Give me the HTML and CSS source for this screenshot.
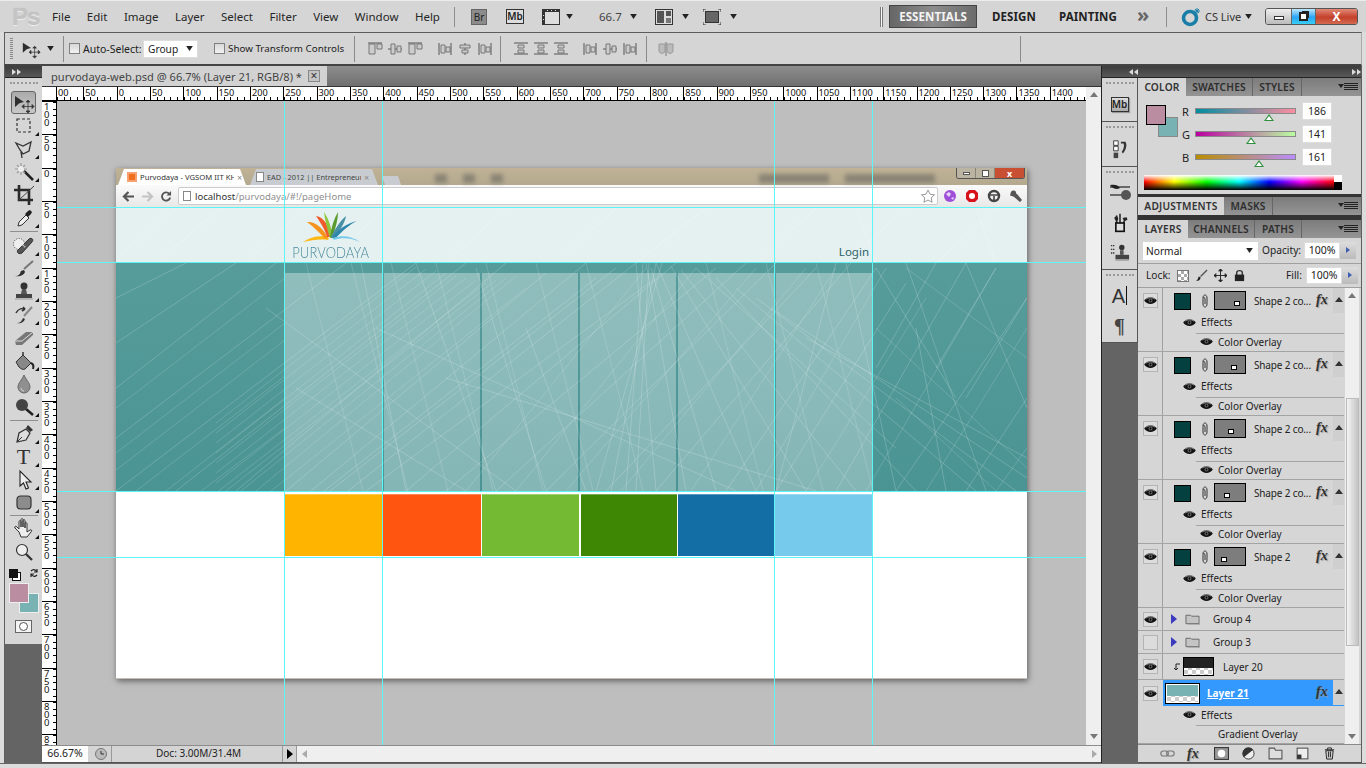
FILE: index.html
```html
<!DOCTYPE html>
<html lang="en">
<head>
<meta charset="utf-8">
<title>Photoshop CS5 - purvodaya-web.psd</title>
<link rel="stylesheet" href="styles.css">
</head>
<body>
<svg class="defs" xmlns="http://www.w3.org/2000/svg">
  <symbol id="i-move" viewBox="0 0 24 22"><path d="M3 4l9 6-4 1-1 .5L3 15z" fill="#2e2e2e"/><path d="M16 9v11M10.500 14.500h11M16 8l-2 2h4zM16 21l-2-2h4zM10 14.500l2-2v4zM22 14.500l-2-2v4z" fill="#333" stroke="#333" stroke-width=".8"/></symbol>
  <symbol id="i-marquee" viewBox="0 0 24 22"><rect x="5" y="4" width="13" height="13" fill="none" stroke="#333" stroke-width="1.200" stroke-dasharray="3 2"/></symbol>
  <symbol id="i-lasso" viewBox="0 0 24 22"><path d="M4 5l7 3 8-4-2 9-6 3-3-4zM9 14l1 6" fill="none" stroke="#333" stroke-width="1.300"/></symbol>
  <symbol id="i-wand" viewBox="0 0 24 22"><path d="M12 10l9 9" stroke="#222" stroke-width="2.500"/><path d="M9 2v12M3 8h12M5 4l8 8M13 4l-8 8" stroke="#999" stroke-width="1.200"/><circle cx="9" cy="8" r="3" fill="#eee"/></symbol>
  <symbol id="i-crop" viewBox="0 0 24 22"><path d="M7 1v15h14M2 6h15v15" fill="none" stroke="#2b2b2b" stroke-width="2.600"/><path d="M7 16L22 2" stroke="#444"/></symbol>
  <symbol id="i-drop" viewBox="0 0 24 22"><path d="M7 15l7-7 3 3-7 7-4 1z" fill="#eee" stroke="#333"/><path d="M13 7l3-3 2-1 2 2-1 2-3 3z" fill="#222"/></symbol>
  <symbol id="i-heal" viewBox="0 0 24 22"><circle cx="7" cy="9" r="5.500" fill="#eee" stroke="#444" stroke-dasharray="1 1.500"/><path d="M6 15L17 4c3-2 5 1 3 3L10 18c-3 2-6-1-4-3z" fill="#555" stroke="#333"/><path d="M11 10l2 2" stroke="#ddd" stroke-width="2" stroke-dasharray="1 1"/></symbol>
  <symbol id="i-brush" viewBox="0 0 24 22"><path d="M21 3L12 11" stroke="#777" stroke-width="2"/><path d="M3 18c4 0 5-2 6-5l3-1 1 2c-1 3-5 5-10 4z" fill="#2e2e2e"/></symbol>
  <symbol id="i-stamp" viewBox="0 0 24 22"><circle cx="12" cy="5" r="3.500" fill="#333"/><path d="M10 8h4l1 5H9z" fill="#555"/><path d="M4 13h16v4H4z" fill="#444"/><path d="M3 18h18" stroke="#999"/></symbol>
  <symbol id="i-hist" viewBox="0 0 24 22"><path d="M20 3L12 12" stroke="#888" stroke-width="2"/><path d="M5 19c3 0 5-2 6-5l2 1c-1 3-4 5-8 4z" fill="#333"/><path d="M4 9c2-4 6-5 9-4l-2-2M13 5l-3 2" fill="none" stroke="#333" stroke-width="1.600"/></symbol>
  <symbol id="i-eraser" viewBox="0 0 24 22"><path d="M3 14L14 5h7v3L10 18H4z" fill="#777"/><path d="M3 14h7l11-9" fill="none" stroke="#ddd"/></symbol>
  <symbol id="i-bucket" viewBox="0 0 24 22"><path d="M4 12l7-7 8 8-6 6c-2 1-4 0-6-2z" fill="#888" stroke="#333"/><path d="M11 5V2" stroke="#333" stroke-width="1.500"/><path d="M19 13c2 1 3 3 2 6" fill="none" stroke="#222" stroke-width="2"/></symbol>
  <symbol id="i-blur" viewBox="0 0 24 22"><path d="M12 2c2 5 6 8 6 12a6 6 0 0 1-12 0c0-4 4-7 6-12z" fill="#8f8f8f" stroke="#666"/><path d="M9 15c0 2 1 3 3 3" stroke="#ddd" fill="none"/></symbol>
  <symbol id="i-sponge" viewBox="0 0 24 22"><path d="M14 13l7 6" stroke="#222" stroke-width="2.500"/><circle cx="10" cy="9" r="6" fill="#444"/></symbol>
  <symbol id="i-pen" viewBox="0 0 24 22"><path d="M5 19l2-9 7-4 4 4-4 7z" fill="#ddd" stroke="#333" stroke-width="1.200"/><path d="M5 19l5-5" stroke="#333"/><path d="M14 5l2-3 5 5-3 2z" fill="#333"/></symbol>
  <symbol id="i-path" viewBox="0 0 24 22"><path d="M8 2v15l3.500-3 2.500 6 2.500-1-2.500-6H19z" fill="#eee" stroke="#222" stroke-width="1.100"/></symbol>
  <symbol id="i-shape" viewBox="0 0 24 22"><rect x="5" y="4" width="14" height="13" rx="3.500" fill="#8c8c8c" stroke="#333" stroke-width="1.200"/></symbol>
  <symbol id="i-hand" viewBox="0 0 24 22"><path d="M7 14L3 10c-1-2 1-2 2-1l2 2V4c0-2 2-2 2 0v5-7c0-2 2-2 2 0v7-6c0-2 2-2 2 0v7-5c0-1 2-1 2 1v8l3-2c2-1 2 1 1 2l-4 5H9z" fill="#eee" stroke="#333"/></symbol>
  <symbol id="i-zoom" viewBox="0 0 24 22"><circle cx="10" cy="9" r="5.500" fill="#eee" stroke="#333" stroke-width="1.200"/><path d="M14 13l6 6" stroke="#333" stroke-width="2.300"/></symbol>
  <symbol id="i-eye" viewBox="0 0 14 10"><path d="M0 5c3-5 11-5 14 0-3 5-11 5-14 0z" fill="#111"/><path d="M2 3.500c3-2 7-2 10 0" stroke="#bbb" stroke-width=".7" fill="none"/><circle cx="7" cy="5" r="2.200" fill="#666"/><circle cx="7" cy="5" r="1" fill="#000"/></symbol>
  <symbol id="i-clip" viewBox="0 0 8 14"><path d="M2 4c0-4 4-4 4 0v6c0 4-4 4-4 0V5c0-2 2-2 2 0v5" fill="none" stroke="#333" stroke-width="1"/></symbol>
  <symbol id="i-folder" viewBox="0 0 16 12"><path d="M1 2h5l1 1h8v8H1z" fill="#c4c4c4" stroke="#666"/><path d="M16 4v8H3" fill="none" stroke="#aaa"/></symbol>
  <symbol id="i-al" viewBox="0 0 16 14"><path d="M1 1h14" stroke="#555"/><path d="M2 2h6v10H2z" fill="#ccc" stroke="#777"/><path d="M10 2h5v5h-5z" fill="#ccc" stroke="#777"/></symbol>
  <symbol id="i-bl" viewBox="0 0 16 14"><path d="M1 7h14" stroke="#555"/><path d="M4 2h4v10H4z" fill="#ccc" stroke="#777"/><path d="M10 4h4v6h-4z" fill="#ccc" stroke="#777"/></symbol>
  <symbol id="i-cl" viewBox="0 0 16 14"><path d="M8 1v12" stroke="#555"/><path d="M3 3h10v3H3z" fill="#ccc" stroke="#777"/><path d="M5 8h6v3H5z" fill="#ccc" stroke="#777"/></symbol>
  <symbol id="i-dl" viewBox="0 0 16 14"><path d="M1 1h14M1 12h14" stroke="#555"/><path d="M5 3h6v3H5zM5 8h6v3H5z" fill="#ccc" stroke="#777"/></symbol>
  <symbol id="i-el" viewBox="0 0 16 14"><path d="M2 1v12M14 1v12" stroke="#555"/><path d="M4 3h4v8H4zM9 5h4v5H9z" fill="#ccc" stroke="#777"/></symbol>
  <symbol id="i-arrow" viewBox="0 0 8 6"><path d="M0 0h8L4 6z" fill="#222"/></symbol>
</svg>

<div class="app">
  <header class="menubar">
    <div class="ps">Ps</div>
    <nav class="menu"><span>File</span><span>Edit</span><span>Image</span><span>Layer</span><span>Select</span><span>Filter</span><span>View</span><span>Window</span><span>Help</span></nav>
    <i class="vsep vsep-a"></i>
    <span class="mini-br">Br</span>
    <span class="mini-mb">Mb</span>
    <svg class="film" viewBox="0 0 18 16"><rect x=".5" y=".5" width="17" height="15" fill="#ddd" stroke="#333"/><path d="M0 0h18v3H0zM0 3h3v13H0z" fill="#333"/><path d="M5 1h1v1H5zM9 1h1v1H9zM13 1h1v1h-1zM1 6h1v1H1zM1 10h1v1H1z" fill="#ddd"/></svg>
    <svg class="drop drop-a"><use href="#i-arrow"/></svg>
    <span class="zoomval">66.7</span>
    <svg class="drop drop-b"><use href="#i-arrow"/></svg>
    <svg class="film film-b" viewBox="0 0 18 16"><rect x=".5" y=".5" width="17" height="15" fill="#ddd" stroke="#333"/><path d="M2 2h7v12H2zM11 2h5v5h-5z" fill="#555"/><path d="M11 9h5v5h-5z" fill="#777"/></svg>
    <svg class="drop drop-c"><use href="#i-arrow"/></svg>
    <svg class="film film-c" viewBox="0 0 18 16"><path d="M0 3V0h3M15 0h3v3M18 13v3h-3M3 16H0v-3" fill="none" stroke="#333"/><rect x="2.500" y="2.500" width="13" height="11" fill="#666" stroke="#333"/></svg>
    <svg class="drop drop-c"><use href="#i-arrow"/></svg>
    <i class="grip2"></i>
    <span class="ws ws-on">ESSENTIALS</span>
    <span class="ws ws-d">DESIGN</span>
    <span class="ws ws-p">PAINTING</span>
    <span class="chev">»</span>
    <i class="vsep vsep-b"></i>
    <svg class="cslogo" viewBox="0 0 20 20"><circle cx="9" cy="11" r="6.500" fill="none" stroke="#1a7fa8" stroke-width="3.600"/><path d="M16 1v6M13 4h6M14 2l4 4M18 2l-4 4" stroke="#1a7fa8"/></svg>
    <span class="cslive">CS Live</span>
    <svg class="drop drop-d"><use href="#i-arrow"/></svg>
    <div class="winbtns"><span class="wb wb-min"><i></i></span><span class="wb wb-res"><i></i></span><span class="wb wb-close">X</span></div>
  </header>

  <div class="options">
    <i class="dots"></i>
    <svg class="opt-move"><use href="#i-move"/></svg>
    <svg class="drop drop-o"><use href="#i-arrow"/></svg>
    <i class="osep osep-a"></i>
    <i class="check check-a"></i><span class="otext otext-a">Auto-Select:</span>
    <span class="oselect">Group<svg class="drop"><use href="#i-arrow"/></svg></span>
    <i class="check check-b"></i><span class="otext otext-b">Show Transform Controls</span>
    <i class="osep osep-b"></i>
    <div class="aligns a1"><svg><use href="#i-al"/></svg><svg><use href="#i-bl"/></svg><svg><use href="#i-al"/></svg></div>
    <div class="aligns a2"><svg><use href="#i-el"/></svg><svg><use href="#i-cl"/></svg><svg><use href="#i-el"/></svg></div>
    <i class="osep osep-c"></i>
    <div class="aligns a3"><svg><use href="#i-dl"/></svg><svg><use href="#i-dl"/></svg><svg><use href="#i-dl"/></svg></div>
    <div class="aligns a4"><svg><use href="#i-el"/></svg><svg><use href="#i-bl"/></svg><svg><use href="#i-el"/></svg></div>
    <i class="osep osep-d"></i>
    <svg class="automask" viewBox="0 0 16 14"><path d="M8 0v14" stroke="#777"/><path d="M1 2h6v7c0 3-6 3-6 0zM9 2h6v7c0 3-6 3-6 0z" fill="#bbb" stroke="#999"/></svg>
    <i class="osep osep-e"></i>
  </div>

  <div class="workspace">
    <aside class="toolcol">
      <div class="darkhead"><span class="tri-r"></span><span class="tri-r"></span></div>
      <div class="tools">
        <i class="dots-h"></i>
        <div class="tool tool-on"><svg><use href="#i-move"/></svg></div>
        <div class="tool more"><svg><use href="#i-marquee"/></svg></div>
        <div class="tool more"><svg><use href="#i-lasso"/></svg></div>
        <div class="tool more"><svg><use href="#i-wand"/></svg></div>
        <div class="tool"><svg><use href="#i-crop"/></svg></div>
        <div class="tool more"><svg><use href="#i-drop"/></svg></div>
        <i class="tsep"></i>
        <div class="tool more"><svg><use href="#i-heal"/></svg></div>
        <div class="tool more"><svg><use href="#i-brush"/></svg></div>
        <div class="tool more"><svg><use href="#i-stamp"/></svg></div>
        <div class="tool more"><svg><use href="#i-hist"/></svg></div>
        <div class="tool more"><svg><use href="#i-eraser"/></svg></div>
        <div class="tool more"><svg><use href="#i-bucket"/></svg></div>
        <div class="tool more"><svg><use href="#i-blur"/></svg></div>
        <div class="tool more"><svg><use href="#i-sponge"/></svg></div>
        <i class="tsep tsep-4"></i>
        <div class="tool more"><svg><use href="#i-pen"/></svg></div>
        <div class="tool more ttool">T</div>
        <div class="tool more"><svg><use href="#i-path"/></svg></div>
        <div class="tool more"><svg><use href="#i-shape"/></svg></div>
        <i class="tsep tsep-3"></i>
        <div class="tool more"><svg><use href="#i-hand"/></svg></div>
        <div class="tool"><svg><use href="#i-zoom"/></svg></div>
        <div class="defaults"><span class="dc"></span><svg class="swap" viewBox="0 0 10 10"><path d="M2 3c2-2 4-2 6 1M8 7C6 9 4 9 2 6M8 1v3H5M2 9V6h3" fill="none" stroke="#222" stroke-width="1.200"/></svg></div>
        <div class="colors"><span class="fg"></span><span class="bg"></span></div>
        <div class="qmask"><i></i></div>
      </div>
    </aside>

    <main class="docarea">
      <div class="tabbar"><div class="doctab"><span>purvodaya-web.psd @ 66.7% (Layer 21, RGB/8) *</span><b class="tabx">×</b></div></div>
      <div class="hruler-row">
        <div class="corner"></div>
        <div class="hruler"><span class="first">00</span><span>50</span><span>0</span><span>50</span><span>100</span><span>150</span><span>200</span><span>250</span><span>300</span><span>350</span><span>400</span><span>450</span><span>500</span><span>550</span><span>600</span><span>650</span><span>700</span><span>750</span><span>800</span><span>850</span><span>900</span><span>950</span><span>1000</span><span>1050</span><span>1100</span><span>1150</span><span>1200</span><span>1250</span><span>1300</span><span>1350</span><span>1400</span></div>
        <div class="scroll-top"><b class="up"></b></div>
      </div>
      <div class="mid">
        <div class="vruler"><span>100</span><span>50</span><span>0</span><span>50</span><span>100</span><span>150</span><span>200</span><span>250</span><span>300</span><span>350</span><span>400</span><span>450</span><span>500</span><span>550</span><span>600</span><span>650</span><span>700</span><span>750</span><span>800</span><span>850</span></div>
        <div class="canvas">
          <div class="doc">
            <div class="chrome">
              <div class="cr-tabs">
                <div class="cr-tab cr-tab-on"><i class="fav"></i><span>Purvodaya - VGSOM IIT KH</span><b>×</b></div>
                <div class="cr-tab cr-tab-2"><i class="page"></i><span>EAD - 2012 || Entrepreneurs</span><b>×</b></div>
                <div class="cr-new"></div>
                <div class="blur-bar"><i></i><i></i><i></i><i></i><i></i></div>
                <div class="cr-win"><span><i></i></span><span><i class="r"></i></span><span class="x">x</span></div>
              </div>
              <div class="cr-bar">
                <svg class="nav" viewBox="0 0 14 12"><path d="M13 6H3M7 1L2 6l5 5" fill="none" stroke="#555" stroke-width="2.400"/></svg>
                <svg class="nav" viewBox="0 0 14 12"><path d="M1 6h10M7 1l5 5-5 5" fill="none" stroke="#c4c4c4" stroke-width="2.400"/></svg>
                <svg class="nav" viewBox="0 0 14 12"><path d="M11 7a4.500 4.500 0 1 1-1-4" fill="none" stroke="#555" stroke-width="2"/><path d="M12 0v5H7z" fill="#555"/></svg>
                <div class="omnibox"><i class="page"></i><span class="host">localhost</span><span class="rest">/purvodaya/#!/pageHome</span>
                  <svg class="star" viewBox="0 0 14 14"><path d="M7 1l2 4.200 4.500.6-3.300 3 .9 4.500L7 11l-4.100 2.300.9-4.500-3.300-3L5 5.200z" fill="#fff" stroke="#999"/></svg></div>
                <svg class="ext" viewBox="0 0 14 14"><circle cx="7" cy="7" r="6" fill="#a04fd8"/><path d="M3 5l3-2 2 2-2 3zM8 9l3-1-1 3z" fill="#e8d8f8"/></svg>
                <svg class="ext" viewBox="0 0 14 14"><path d="M4 1h6l3 3v6l-3 3H4l-3-3V4z" fill="#d8121c"/><circle cx="7" cy="7" r="3" fill="#fff"/></svg>
                <svg class="ext" viewBox="0 0 14 14"><circle cx="7" cy="7" r="5" fill="none" stroke="#444" stroke-width="2.400"/><path d="M2 6h10M7 7v5" stroke="#444" stroke-width="1.600"/></svg>
                <svg class="ext" viewBox="0 0 14 14"><path d="M2 3c1-2 4-2 5 0 0 1 0 2 1 2l5 6-2 2-6-5c-1-1-2-1-3-1S1 5 2 3z" fill="#555"/></svg>
              </div>
            </div>
            <div class="page-wrap">
              <svg class="linework" viewBox="0 0 911 283" preserveAspectRatio="none">
                <path class="lw-a" d="M0 50L60 0M40 55L105 0M130 55L190 0M210 55L270 0M330 55L390 0M440 55L500 0M520 55L590 0M640 55L700 0M730 55L790 0M820 55L880 0M760 55L740 0M860 0L880 55"/>
                <path class="lw-b" d="M0 135L120 55M0 180L160 55M0 230L230 55M0 283L300 55M60 283L350 55M120 283L390 55M170 283L430 65M195 283L470 55M208 283L480 70M214 283L500 60M232 283L520 55M250 283L540 70M290 283L560 55M330 283L600 60M380 283L630 55M430 283L660 55M490 283L700 60M540 283L735 55M610 283L760 60M660 283L790 75M720 283L850 55M780 283L911 90M850 283L911 190M0 90L70 55M245 55L290 283M300 55L380 283M360 60L430 283M410 120L470 283M150 100L400 283M180 180L350 283M260 120L620 283M330 170L700 283M520 55L540 283M527 55L510 283M533 55L520 283M540 55L495 283M546 55L480 283M530 55L570 283M535 60L600 283M540 55L640 283M555 58L690 283M565 62L740 283M580 60L780 240M600 70L800 283M620 80L860 283M640 90L900 283M655 100L911 270M690 130L911 250M730 55L780 283M790 55L870 283M850 55L911 200M720 55L660 283M800 120L830 283M760 60L840 190M820 55L760 160M880 60L820 160M911 90L850 190"/>
                <path class="lw-c" d="M100 215L300 59M100 225L310 61M100 235L320 63M100 245L330 65M100 255L340 68M100 265L350 70M100 275L360 72M100 285L370 75M110 283L380 72M125 283L390 70M140 283L400 68M155 283L410 80M0 200L169 70M0 245L169 115M0 262L169 132M20 283L169 168M50 283L169 190M85 283L169 220M190 55L247 283M235 55L292 283M275 55L332 283M320 55L377 283M370 55L427 283M420 55L477 283M470 55L527 283M590 55L647 283M650 55L707 283M700 55L757 283M350 283L530 60M400 283L580 60M450 283L640 60M505 283L690 60M575 283L720 60M640 283L770 60M690 283L810 90M750 283L880 60M810 283L911 120M880 283L911 240M760 120L911 260M780 190L880 283M790 60L911 150"/>
              </svg>
              <div class="site-head">
                <div class="logo">
                  <svg class="fan" viewBox="0 0 62 34"><path d="M3 31C12 25 22 24 29 27L28 29C20 28 12 29 3 31z" fill="#fdb913"/><path d="M7 11C15 10 24 18 28 27L25 28C20 22 14 16 7 11z" fill="#f7941d"/><path d="M16 5C24 6 30 16 30 26L27 26C25 18 20 11 16 5z" fill="#f15a29"/><path d="M24 1C28 7 32 16 32 27L30 27C27 18 25 9 24 1z" fill="#8dc63f"/><path d="M38 1C38 9 35 19 32 27L30 26C31 17 34 8 38 1z" fill="#5a9a2e"/><path d="M46 5C45 12 39 21 33 27L31 26C35 18 40 10 46 5z" fill="#4a90a4"/><path d="M57 10C50 13 41 21 35 28L32 27C37 19 47 12 57 10z" fill="#2e86ab"/><path d="M60 31C52 27 42 26 34 29L33 27C42 24 52 25 60 31z" fill="#76cbec"/></svg>
                  <span class="wordmark">PURVODAYA</span>
                </div>
                <span class="login">Login</span>
              </div>
              <div class="hero">
                <div class="hero-grid"><i></i><i></i><i></i><i></i><i></i><i></i></div>
              </div>
            </div>
            <div class="swatches"><i class="s1"></i><i class="s2"></i><i class="s3"></i><i class="s4"></i><i class="s5"></i><i class="s6"></i></div>
          </div>
          <i class="guide gv g1"></i><i class="guide gv g2"></i><i class="guide gv g3"></i><i class="guide gv g4"></i>
          <i class="guide gh h1"></i><i class="guide gh h2"></i><i class="guide gh h3"></i><i class="guide gh h4"></i>
        </div>
        <div class="vscroll"><b class="down"></b></div>
      </div>
      <div class="status">
        <span class="st-zoom">66.67%</span>
        <svg class="st-ic" viewBox="0 0 12 12"><circle cx="6" cy="6" r="5.500" fill="#bbb" stroke="#777"/><path d="M6 3v3h3" fill="none" stroke="#333"/></svg>
        <span class="st-doc">Doc: 3.00M/31.4M</span>
        <span class="st-arrow"></span>
        <div class="hscroll"><b class="left"></b><b class="right"></b></div>
      </div>
    </main>

    <aside class="dock">
      <div class="darkhead darkhead-r"><span class="tri-l"></span><span class="tri-l"></span></div>
      <section class="dk dk1"><i class="dots-h"></i><span class="mini-mb dk-mb">Mb</span></section>
      <section class="dk dk2"><i class="dots-h"></i><svg viewBox="0 0 20 22"><path d="M3 2h5v5H3zM3 8h5v5H3z" fill="#fff" stroke="#333"/><path d="M3 15h5v6H3z" fill="#444"/><path d="M11 3h5c2 3 1 9-3 13l-1-2c2-3 3-6 2-9h-3z" fill="#333"/></svg></section>
      <section class="dk dk3"><i class="dots-h"></i>
        <svg viewBox="0 0 22 20"><path d="M1 4h20" stroke="#444" stroke-width="1.500"/><path d="M1 2c5-1 8 0 10 3-3 2-7 1-10-3z" fill="#222"/><path d="M1 12h20" stroke="#444" stroke-width="1.500"/><circle cx="17" cy="12" r="5" fill="#555"/></svg>
        <svg viewBox="0 0 22 24"><path d="M7 12V3M11 12V1M15 12l3-6" stroke="#333" stroke-width="2"/><path d="M4 6l3-3 2 4-2 4zM14 6l5-1 1 3-4 2z" fill="#222"/><rect x="6" y="12" width="10" height="10" fill="#ddd" stroke="#111" stroke-width="2"/></svg>
        <svg viewBox="0 0 22 22"><path d="M1 3h4M1 7h4M1 11h4" stroke="#333" stroke-dasharray="1.500 .8" stroke-width="1.400"/><circle cx="13" cy="5" r="3" fill="#333"/><path d="M11 8h4v5h-4z" fill="#555"/><path d="M6 13h15v5H6z" fill="#444"/><path d="M6 19h15" stroke="#999"/></svg>
      </section>
      <section class="dk dk4"><i class="dots-h"></i><span class="dk-a">A<i></i></span><span class="dk-p">¶</span></section>
    </aside>

    <aside class="panels">
      <div class="darkhead darkhead-p"><span class="tri-l"></span><span class="tri-l"></span><span class="sp"></span><span class="tri-r"></span><span class="tri-r"></span></div>
      <div class="tabs"><span class="tab on t-color">COLOR</span><span class="tab t-sw">SWATCHES</span><span class="tab t-st">STYLES</span><span class="pmenu"></span></div>
      <section class="color-panel">
        <div class="cswatch"><i class="cfg"></i><i class="cbg"></i></div>
        <div class="cslider sl-r"><label>R</label><div class="bar bar-r"><i class="thumb"></i></div><span class="val">186</span></div>
        <div class="cslider sl-g"><label>G</label><div class="bar bar-g"><i class="thumb"></i></div><span class="val">141</span></div>
        <div class="cslider sl-b"><label>B</label><div class="bar bar-b"><i class="thumb"></i></div><span class="val">161</span></div>
        <div class="spectrum"><div class="ramp"></div><div class="bw"></div></div>
      </section>
      <div class="pgap"></div>
      <div class="tabs tabs-adj"><span class="tab on t-adj">ADJUSTMENTS</span><span class="tab t-mask">MASKS</span><span class="pmenu"></span></div>
      <div class="pgap pgap-2"></div>
      <div class="tabs"><span class="tab on t-lay">LAYERS</span><span class="tab t-ch">CHANNELS</span><span class="tab t-pa">PATHS</span><span class="pmenu"></span></div>
      <div class="blend">
        <span class="bselect">Normal<svg class="drop"><use href="#i-arrow"/></svg></span>
        <span class="blabel">Opacity:</span><span class="bnum">100%</span><span class="bstep"></span>
      </div>
      <div class="lockrow">
        <span class="blabel lk">Lock:</span>
        <i class="lk-trans"></i>
        <svg class="lk-ic" viewBox="0 0 14 14"><path d="M13 1L6 8" stroke="#555" stroke-width="1.500"/><path d="M1 13c3 0 5-1 5-4L4 8c-1 2-1 4-3 5z" fill="#222"/></svg>
        <svg class="lk-ic" viewBox="0 0 14 14"><path d="M7 0v14M0 7h14M7 0L5 2h4zM7 14l-2-2h4zM0 7l2-2v4zM14 7l-2-2v4z" fill="#222" stroke="#222"/></svg>
        <svg class="lk-ic" viewBox="0 0 14 14"><path d="M4 7V4c0-3 6-3 6 0v3" fill="none" stroke="#333" stroke-width="1.500"/><rect x="2" y="6" width="10" height="7" fill="#222"/></svg>
        <span class="blabel fill">Fill:</span><span class="bnum">100%</span><span class="bstep"></span>
      </div>
      <div class="layers-wrap">
        <div class="layers">
          <div class="layer"><div class="eyecol"><span class="eyebox"><svg><use href="#i-eye"/></svg></span></div><div class="lbody"><div class="lmain"><i class="lthumb"></i><svg class="clip"><use href="#i-clip"/></svg><i class="lmask m1"></i><span class="lname">Shape 2 co...</span><em class="fx">fx</em><b class="lup"></b></div><div class="eff"><svg><use href="#i-eye"/></svg><span>Effects</span></div><div class="ovr"><svg><use href="#i-eye"/></svg><span>Color Overlay</span></div></div></div>
          <div class="layer"><div class="eyecol"><span class="eyebox"><svg><use href="#i-eye"/></svg></span></div><div class="lbody"><div class="lmain"><i class="lthumb"></i><svg class="clip"><use href="#i-clip"/></svg><i class="lmask m2"></i><span class="lname">Shape 2 co...</span><em class="fx">fx</em><b class="lup"></b></div><div class="eff"><svg><use href="#i-eye"/></svg><span>Effects</span></div><div class="ovr"><svg><use href="#i-eye"/></svg><span>Color Overlay</span></div></div></div>
          <div class="layer"><div class="eyecol"><span class="eyebox"><svg><use href="#i-eye"/></svg></span></div><div class="lbody"><div class="lmain"><i class="lthumb"></i><svg class="clip"><use href="#i-clip"/></svg><i class="lmask m3"></i><span class="lname">Shape 2 co...</span><em class="fx">fx</em><b class="lup"></b></div><div class="eff"><svg><use href="#i-eye"/></svg><span>Effects</span></div><div class="ovr"><svg><use href="#i-eye"/></svg><span>Color Overlay</span></div></div></div>
          <div class="layer"><div class="eyecol"><span class="eyebox"><svg><use href="#i-eye"/></svg></span></div><div class="lbody"><div class="lmain"><i class="lthumb"></i><svg class="clip"><use href="#i-clip"/></svg><i class="lmask m4"></i><span class="lname">Shape 2 co...</span><em class="fx">fx</em><b class="lup"></b></div><div class="eff"><svg><use href="#i-eye"/></svg><span>Effects</span></div><div class="ovr"><svg><use href="#i-eye"/></svg><span>Color Overlay</span></div></div></div>
          <div class="layer"><div class="eyecol"><span class="eyebox"><svg><use href="#i-eye"/></svg></span></div><div class="lbody"><div class="lmain"><i class="lthumb"></i><svg class="clip"><use href="#i-clip"/></svg><i class="lmask m5"></i><span class="lname">Shape 2</span><em class="fx">fx</em><b class="lup"></b></div><div class="eff"><svg><use href="#i-eye"/></svg><span>Effects</span></div><div class="ovr"><svg><use href="#i-eye"/></svg><span>Color Overlay</span></div></div></div>
          <div class="layer group"><div class="eyecol"><span class="eyebox"><svg><use href="#i-eye"/></svg></span></div><div class="lbody gbody"><i class="gtri"></i><svg class="gfold"><use href="#i-folder"/></svg><span>Group 4</span></div></div>
          <div class="layer group"><div class="eyecol"><span class="eyebox"></span></div><div class="lbody gbody"><i class="gtri"></i><svg class="gfold"><use href="#i-folder"/></svg><span>Group 3</span></div></div>
          <div class="layer l20"><div class="eyecol"><span class="eyebox"><svg><use href="#i-eye"/></svg></span></div><div class="lbody l20body"><svg class="clipdown" viewBox="0 0 8 8"><path d="M7 1H3v6M1 5l2 2 2-2" fill="none" stroke="#222"/></svg><i class="l20thumb"></i><span>Layer 20</span></div></div>
          <div class="layer l21"><div class="eyecol"><span class="eyebox"><svg><use href="#i-eye"/></svg></span></div><div class="lbody"><div class="lmain lsel"><i class="l21thumb"></i><span class="lname lname-sel">Layer 21</span><em class="fx">fx</em><b class="lup"></b></div><div class="eff"><svg><use href="#i-eye"/></svg><span>Effects</span></div><div class="ovr ovr-g"><span>Gradient Overlay</span></div></div></div>
        </div>
        <div class="lscroll"><b class="up"></b><i class="lthumbbar"></i><b class="down"></b></div>
      </div>
      <div class="lfoot">
        <svg viewBox="0 0 18 10"><rect x="1" y="2" width="9" height="6" rx="3" fill="none" stroke="#777" stroke-width="1.400"/><rect x="8" y="2" width="9" height="6" rx="3" fill="none" stroke="#777" stroke-width="1.400"/></svg>
        <em class="fx fx-foot">fx</em>
        <svg viewBox="0 0 14 12"><rect x=".5" y=".5" width="13" height="11" fill="#999" stroke="#333"/><circle cx="7" cy="6" r="3.500" fill="#fff"/></svg>
        <svg viewBox="0 0 14 14"><circle cx="7" cy="7" r="6" fill="#eee" stroke="#333"/><path d="M2 11L12 3A6 6 0 0 0 2 11z" fill="#333"/></svg>
        <svg viewBox="0 0 14 12"><path d="M1 1h5l1 2h6v8H1z" fill="#ddd" stroke="#555"/></svg>
        <svg viewBox="0 0 14 12"><rect x="2" y="1" width="10" height="10" fill="#eee" stroke="#555"/><path d="M2 7h4v4H2z" fill="#333"/></svg>
        <svg viewBox="0 0 14 14"><path d="M3 4h8l-1 9H4z" fill="#ccc" stroke="#222"/><path d="M2 3h10M5 3V1h4v2M6 5v6M8 5v6" stroke="#222" fill="none"/></svg>
      </div>
    </aside>
  </div>
  <div class="frame-bottom"></div>
</div>
</body>
</html>
```

FILE: styles.css
```css
* { box-sizing: border-box; }
html, body { margin: 0; padding: 0; height: 100%; overflow: hidden; }
body { font-family: "Noto Sans", "Open Sans", sans-serif; font-size: 11px; color: #222; background: #d4d4d4; }
i, b, em { display: block; font-style: normal; }
svg { display: block; flex: none; }
.defs { display: none; }

.app { width: 1366px; height: 768px; display: flex; flex-direction: column; padding: 0 4px; background: #dcdcdc; }

/* menu bar */
.menubar { height: 32px; flex: none; display: flex; align-items: center; background: #d5d5d5; margin: 0 -4px; padding-left: 12px; border-top: 1px solid #ececec; }
.ps { width: 40px; flex: none; font: bold 24px "Liberation Sans", sans-serif; letter-spacing: -1px; color: #c4c4c4; text-shadow: 0 1px 0 #eee, 0 0 1px #aaa; }
.menu { width: 388px; flex: none; display: flex; justify-content: space-between; font-size: 11.500px; color: #262626; }
.vsep { width: 1px; height: 20px; background: #8e8e8e; flex: none; }
.vsep-a { margin-left: 14px; }
.mini-br { width: 16px; height: 16px; flex: none; margin-left: 16px; font-size: 10px; line-height: 15px; text-align: center; background: #8b8b8b; color: #222; border: 1px solid #666; }
.mini-mb { width: 18px; height: 15px; flex: none; margin-left: 19px; font-size: 10px; font-weight: 600; line-height: 13px; text-align: center; border: 1px solid #333; background: #ddd; color: #222; }
.film { width: 18px; height: 16px; margin-left: 18px; }
.drop { width: 7px; height: 5px; }
.drop-a { margin-left: 6px; }
.zoomval { width: 24px; flex: none; margin-left: 26px; font-size: 11.500px; color: #444; }
.drop-b { margin-left: 7px; }
.film-b { margin-left: 18px; }
.drop-c { margin-left: 9px; }
.film-c { margin-left: 14px; }
.grip2 { width: 3px; height: 20px; flex: none; margin-left: 143px; border-left: 1px solid #777; border-right: 1px solid #777; background: #fafafa; }
.ws { flex: none; font-weight: 700; font-size: 11.500px; letter-spacing: .1px; color: #222; white-space: nowrap; }
.ws-on { width: 88px; height: 23px; margin-left: 6px; line-height: 21px; text-align: center; color: #f4f4f4; background: linear-gradient(90deg, #666, #8c8c8c 50%, #6c6c6c); border: 1px solid #444; }
.ws-d { width: 44px; margin-left: 15px; }
.ws-p { width: 58px; margin-left: 23px; }
.chev { flex: none; width: 14px; margin-left: 20px; font-size: 20px; line-height: 20px; font-weight: 700; color: #666; margin-top: -4px; }
.vsep-b { margin-left: 15px; }
.cslogo { width: 20px; height: 20px; margin-left: 14px; }
.cslive { flex: none; width: 38px; margin-left: 4px; font-size: 11px; color: #333; white-space: nowrap; }
.drop-d { margin-left: 2px; }
.winbtns { display: flex; flex: none; height: 17px; margin-left: 13px; border: 1px solid #555; border-radius: 3px; overflow: hidden; width: 93px; }
.wb { display: flex; align-items: center; justify-content: center; height: 100%; }
.wb-min { width: 26px; background: linear-gradient(#eee, #bbb); border-right: 1px solid #666; }
.wb-min i { width: 10px; height: 4px; margin-top: 3px; background: #fff; border: 1px solid #333; }
.wb-res { width: 24px; background: linear-gradient(#bfe8ff, #2aa3f4 55%, #37d0f8); border-right: 1px solid #666; }
.wb-res i { width: 9px; height: 9px; background: #fff; border: 2px solid #222; box-shadow: 2px -2px 0 -1px #222; }
.wb-close { flex: 1; background: linear-gradient(#e08a78, #c4402a 55%, #d46a50); color: #fff; font-weight: 700; font-size: 12px; }

/* options bar */
.options { height: 34px; flex: none; display: flex; align-items: center; background: #d5d5d5; border: 1px solid #5c5c5c; border-right-color: #aaa; border-bottom: 2px solid #444; }
.dots { width: 3px; height: 22px; flex: none; margin-left: 5px; background: repeating-linear-gradient(#888 0 1px, transparent 1px 2px); }
.opt-move { width: 22px; height: 20px; margin-left: 7px; }
.drop-o { margin-left: 5px; }
.osep { width: 1px; height: 26px; background: #8a8a8a; flex: none; }
.osep-a { margin-left: 9px; }
.check { width: 11px; height: 11px; background: linear-gradient(#d8d8d8, #f2f2f2); border: 1px solid #808080; flex: none; }
.check-a { margin-left: 5px; }
.otext { margin-left: 3px; white-space: nowrap; flex: none; }
.otext-a { width: 57px; font-size: 10.500px; }
.otext-b { width: 117px; font-size: 9.800px; }
.oselect { display: flex; flex: none; align-items: center; justify-content: space-between; width: 55px; height: 18px; margin-left: 3px; padding: 0 4px; background: #fff; border: 1px solid #ddd; font-size: 10.200px; }
.check-b { margin-left: 16px; }
.osep-b { margin-left: 9px; }
.aligns { display: flex; flex: none; gap: 4px; }
.aligns svg { width: 16px; height: 14px; }
.a1 { margin-left: 12px; }
.a2 { margin-left: 14px; }
.osep-c { margin-left: 7px; }
.a3 { margin-left: 12px; }
.a4 { margin-left: 13px; }
.osep-d { margin-left: 8px; }
.automask { width: 16px; height: 14px; margin-left: 11px; }
.osep-e { margin-left: 346px; }

/* workspace */
.workspace { flex: 1; min-height: 0; display: flex; background: #5f5f5f; }
.darkhead { height: 12px; flex: none; display: flex; align-items: center; gap: 1px; padding-left: 7px; background: linear-gradient(#3d3d3d, #585858); border-bottom: 1px solid #222; }
.tri-r { width: 0; height: 0; border: 3px solid transparent; border-left: 4px solid #ddd; border-right: 0; }
.tri-l { width: 0; height: 0; border: 3px solid transparent; border-right: 4px solid #ddd; border-left: 0; }
.sp { flex: 1; }

.toolcol { width: 37px; flex: none; display: flex; flex-direction: column; margin-left: 1px; background: #646464; }
.tools { height: 566px; display: flex; flex-direction: column; align-items: center; background: #d6d6d6; padding-top: 3px; position: relative; }
.dots-h { width: 28px; height: 1px; flex: none; margin: 0 auto; border-top: 2px dotted #999; }
.tools > .dots-h { margin-bottom: 7px; margin-top: 1px; }
.tool { width: 25px; height: 23px; flex: none; display: flex; align-items: center; justify-content: center; position: relative; }
.tool svg { width: 24px; height: 22px; }
.tool-on { background: linear-gradient(#aaa, #c8c8c8); border: 1px solid #666; border-radius: 3px; }
.more::after { content: ""; position: absolute; right: -3px; bottom: 1px; width: 0; height: 0; border-style: solid; border-width: 0 0 4px 4px; border-color: transparent transparent #111 transparent; }
.ttool { font: 22px/23px "Liberation Serif", serif; color: #333; justify-content: center; }
.tsep { width: 28px; height: 1px; flex: none; margin: 2px 0; background: #8f8f8f; }
.tsep-4 { margin: 1.500px 0; }
.tsep-3 { margin: 1px 0; }
.defaults { width: 30px; height: 14px; flex: none; margin-top: 3px; display: flex; align-items: center; justify-content: space-between; }
.dc { width: 9px; height: 9px; background: #111; box-shadow: 3px 3px 0 -1px #fff, 3px 3px 0 0 #111; }
.swap { width: 10px; height: 10px; }
.colors { width: 30px; height: 30px; flex: none; margin-top: 3px; position: relative; }
.fg, .bg { position: absolute; width: 20px; height: 20px; border: 1px solid #eee; }
.fg { left: 0; top: 0; background: #ba8da1; z-index: 1; }
.bg { left: 10px; top: 10px; background: #78b2b2; }
.qmask { width: 17px; height: 13px; flex: none; margin-top: 7px; display: flex; align-items: center; justify-content: center; background: #f4f4f4; border: 1px solid #666; }
.qmask i { width: 9px; height: 9px; border-radius: 50%; background: #fff; border: 1px solid #555; }

/* doc area */
.docarea { width: 1059px; flex: none; display: flex; flex-direction: column; }
.tabbar { height: 21px; flex: none; background: linear-gradient(#8e8e8e, #6f6f6f); border-bottom: 1px solid #333; }
.doctab { width: 285px; height: 20px; display: flex; align-items: center; padding-left: 9px; background: #d2d2d2; font-size: 11.100px; color: #444; white-space: nowrap; }
.tabx { width: 12px; height: 12px; flex: none; margin-left: 6px; border: 1px solid #888; background: #c4c4c4; font-size: 12px; line-height: 9px; text-align: center; font-weight: 400; color: #333; }
.hruler-row { height: 14px; flex: none; display: flex; }
.corner { width: 15px; flex: none; background: #fff; border-right: 1px solid #000; border-bottom: 1px solid #000; }
.hruler { width: 1029px; flex: none; display: flex; overflow: hidden; background: #fff repeating-linear-gradient(90deg, #000 0 1px, transparent 1px 6.667px) 0 100% / 100% 3px no-repeat; border-bottom: 1px solid #000; }
.hruler span { width: 33.333px; flex: none; height: 13px; border-left: 1px solid #000; font-size: 9.200px; line-height: 12.500px; padding-left: 1px; color: #111; }
.hruler .first { width: 26.300px; border-left: 0; }
.scroll-top { flex: 1; background: #efefef; position: relative; }
.up, .down, .left, .right { width: 0; height: 0; border: 4px solid transparent; }
.up { border-bottom: 5px solid #777; border-top: 0; }
.down { border-top: 5px solid #777; border-bottom: 0; }
.left { border-right: 5px solid #aaa; border-left: 0; }
.right { border-left: 5px solid #aaa; border-right: 0; }
.scroll-top .up { margin: 5px auto 0; }
.mid { flex: 1; min-height: 0; display: flex; }
.vruler { width: 15px; flex: none; display: flex; flex-direction: column; overflow: hidden; background: #fff; border-right: 1px solid #000; }
.vruler span { height: 33.333px; flex: none; width: 100%; padding: 1px 6px 0 2px; border-top: 1px solid #000; font-size: 9.500px; line-height: 8px; word-break: break-all; color: #111; background: repeating-linear-gradient(#000 0 1px, transparent 1px 6.667px) 100% 0 / 3px 100% no-repeat; }
.canvas { width: 1029px; flex: none; position: relative; background: #bebebe; padding: 67px 0 0 59px; overflow: hidden; }
.vscroll { flex: 1; background: #efefef; display: flex; flex-direction: column; justify-content: flex-end; align-items: center; padding-bottom: 6px; }
.status { height: 18px; flex: none; display: flex; align-items: center; background: #d4d4d4; border-top: 1px solid #8c8c8c; border-bottom: 1px solid #555; }
.st-zoom { width: 46px; flex: none; height: 100%; text-align: center; line-height: 15px; background: #fff; font-size: 10.500px; }
.st-ic { width: 12px; height: 12px; margin: 0 4px 0 7px; }
.st-doc { width: 172px; flex: none; height: 100%; padding-left: 44px; line-height: 15px; border-left: 1px solid #999; border-right: 1px solid #999; font-size: 10px; white-space: nowrap; }
.st-arrow { width: 14px; flex: none; height: 100%; position: relative; border-right: 1px solid #999; }
.st-arrow::after { content: ""; position: absolute; left: 4px; top: 3px; border: 5px solid transparent; border-left: 6px solid #000; border-right: 0; }
.hscroll { flex: 1; height: 100%; display: flex; align-items: center; justify-content: space-between; padding: 0 4px 0 5px; background: #efefef; }

/* document */
.doc { width: 911px; height: 511px; display: flex; flex-direction: column; background: #fff; box-shadow: 1px 2px 6px rgba(0, 0, 0, .5); border-bottom: 1px solid #c4c0b8; }
.chrome { height: 40px; flex: none; display: flex; flex-direction: column; }
.cr-tabs { height: 17px; flex: none; display: flex; align-items: flex-end; padding-left: 2px; background: linear-gradient(#bfb295, #b4a98f); position: relative; }
.cr-tab { width: 128px; flex: none; height: 16px; display: flex; align-items: center; gap: 3px; padding: 0 4px 0 9px; background: #c8ccd0; font-size: 7.700px; color: #444; white-space: nowrap; overflow: hidden; clip-path: polygon(0 100%, 6px 0, 122px 0, 128px 100%); margin-right: 4px; }
.cr-tab span { width: 94px; overflow: hidden; flex: none; }
.cr-tab b { flex: none; font-size: 9px; color: #888; font-weight: 400; }
.cr-tab-on { background: #fff; color: #333; }
.cr-tab-2 { padding-left: 6px; }
.cr-tab-2 span { font-size: 7.400px; }
.fav { width: 10px; height: 10px; flex: none; background: #f07020; border: 2px solid #f7a070; }
.page { width: 8px; height: 10px; flex: none; background: #fff; border: 1px solid #888; }
.cr-new { width: 19px; flex: none; height: 9px; background: #c8ccd0; clip-path: polygon(0 0, 16px 0, 19px 100%, 3px 100%); }
.blur-bar { display: flex; gap: 16px; margin: 0 0 2px 34px; filter: blur(2px); opacity: .45; }
.blur-bar i { width: 12px; height: 9px; background: #555; }
.blur-bar i:nth-child(4) { width: 70px; margin-left: 240px; }
.blur-bar i:nth-child(5) { width: 90px; }
.cr-win { position: absolute; top: 0; right: 2px; width: 69px; height: 11px; display: flex; border: 1px solid #555; border-top: 0; border-radius: 0 0 3px 3px; overflow: hidden; }
.cr-win span { width: 19px; display: flex; align-items: center; justify-content: center; background: #bcb4a2; border-right: 1px solid #8c8678; }
.cr-win span i { width: 7px; height: 3px; background: #fff; border: 1px solid #555; }
.cr-win span i.r { height: 7px; }
.cr-win .x { flex: 1; background: #c94f33; color: #fff; font-size: 9px; line-height: 9px; font-weight: 700; border: 0; }
.cr-bar { flex: 1; display: flex; align-items: center; padding-left: 6px; background: linear-gradient(#fafafa, #e8e8e8); border-bottom: 1px solid #c8d4d4; }
.nav { width: 13px; height: 11px; margin-right: 6px; }
.omnibox { width: 760px; flex: none; height: 18px; margin-left: -1px; display: flex; align-items: center; padding: 0 2px 0 4px; background: #fff; border: 1px solid #ccc; border-radius: 2px; font-size: 9.500px; white-space: nowrap; }
.omnibox .page { margin-right: 4px; }
.host { color: #333; }
.rest { color: #8f8f8f; }
.star { width: 14px; height: 14px; margin-left: auto; }
.ext { width: 14px; height: 14px; margin-left: 8px; }
.omnibox + .ext { margin-left: 5px; }
.page-wrap { height: 283px; flex: none; display: flex; flex-direction: column; position: relative; }
.linework { position: absolute; left: 0; top: 0; width: 911px; height: 283px; pointer-events: none; z-index: 2; }
.lw-a { fill: none; stroke: #fff; stroke-opacity: .35; stroke-width: .8; }
.lw-b { fill: none; stroke: #fff; stroke-opacity: .24; stroke-width: .8; }
.lw-c { fill: none; stroke: #fff; stroke-opacity: .2; stroke-width: .8; }
.site-head { height: 55px; flex: none; display: flex; justify-content: space-between; align-items: flex-end; padding: 0 158px 3px 176px; background: #e5f0f0; }
.logo { display: flex; flex-direction: column; align-items: center; width: 78px; margin-bottom: 1px; }
.fan { width: 62px; height: 34px; }
.wordmark { font: 300 16.500px/14px "Lato", sans-serif; color: #4a8b9c; letter-spacing: .1px; white-space: nowrap; transform: scaleX(.79); }
.login { font-size: 11.500px; line-height: 14px; color: #2a6266; margin-bottom: 1px; }
.hero { flex: 1; padding: 10px 0 0 169px; background: linear-gradient(#569c9b, #4b9494); }
.hero-grid { width: 587px; height: 100%; display: grid; grid-template-columns: 97px 96px 96px 96px 96px 96px; column-gap: 2px; }
.hero-grid i { background: linear-gradient(rgba(255, 255, 255, .34), rgba(255, 255, 255, .32)); }
.swatches { width: 587px; height: 62px; flex: none; margin: 3px 0 0 169px; display: grid; grid-template-columns: 97px 98px 97px 97px 96px 97px; column-gap: 1px; }
.swatches i { box-shadow: inset 0 1px 0 rgba(255, 255, 255, .3); }
.s1 { background: #ffb400; } .s2 { background: #ff5510; } .s3 { background: #74bb33; }
.s4 { background: #3d8704; margin-left: 1px; } .s5 { background: #146ea6; } .s6 { background: #76cbec; }
.guide { position: absolute; background: #5cf6f6; z-index: 5; }
.gv { width: 1px; top: 0; bottom: 0; }
.gh { height: 1px; left: 0; right: 0; }
.g1 { left: 227px; } .g2 { left: 325px; } .g3 { left: 717px; } .g4 { left: 815px; }
.h1 { top: 106px; } .h2 { top: 161px; } .h3 { top: 390px; } .h4 { top: 456px; }

/* dock */
.dock { width: 37px; flex: none; display: flex; flex-direction: column; background: #646464; border-left: 1px solid #222; }
.darkhead-r { justify-content: flex-end; }
.dk { flex: none; display: flex; flex-direction: column; align-items: center; gap: 10px; padding-top: 4px; background: #d6d6d6; border-bottom: 1px solid #555; border-right: 1px solid #555; }
.dk svg { width: 22px; height: 20px; }
.dk .dots-h { margin-bottom: 0; }
.dk1 { height: 44px; gap: 13px; }
.dk2 { height: 45px; gap: 11px; }
.dk3 { height: 103px; }
.dk4 { height: 73px; }
.dk-mb { margin: 0; width: 18px; height: 15px; background: linear-gradient(#ddd, #aaa); box-shadow: 1px 1px 1px #999; }
.dk-a { display: flex; font: 20px/20px "Liberation Sans", sans-serif; color: #333; }
.dk-a i { width: 1px; height: 19px; background: #111; margin-left: 1px; }
.dk-p { font: 700 20px/20px "Liberation Serif", serif; color: #444; }

/* panels */
.panels { width: 223px; flex: none; display: flex; flex-direction: column; background: #d6d6d6; }
.darkhead-p { padding-left: 0; }
.darkhead-p .tri-l { visibility: hidden; }
.tabs { height: 18px; flex: none; display: flex; background: linear-gradient(#7c7c7c, #949494); }
.tab { display: block; height: 100%; line-height: 18px; font-size: 10.200px; font-weight: 600; letter-spacing: .2px; color: #2e2e2e; text-align: center; border-right: 1px solid #666; white-space: nowrap; }
.tab.on { background: #d6d6d6; color: #333; border-right: 0; }
.t-color { width: 48px; } .t-sw { width: 67px; } .t-st { width: 49px; }
.t-adj { width: 86px; } .t-mask { width: 49px; }
.t-lay { width: 50px; } .t-ch { width: 67px; } .t-pa { width: 47px; }
.pmenu { margin-left: auto; width: 14px; height: 8px; align-self: center; margin-right: 3px; background: repeating-linear-gradient(#222 0 1px, transparent 1px 2px); position: relative; }
.pmenu::before { content: ""; position: absolute; left: -6px; top: 1px; border: 3px solid transparent; border-top: 4px solid #222; border-bottom: 0; }
.color-panel { height: 98px; flex: none; position: relative; }
.cswatch { position: absolute; left: 8px; top: 9px; width: 32px; height: 32px; }
.cfg, .cbg { position: absolute; width: 20px; height: 20px; }
.cfg { left: 0; top: 0; background: #ba8da1; border: 1px solid #000; z-index: 1; }
.cbg { left: 12px; top: 12px; background: #78b2b2; border: 1px solid #888; }
.cslider { position: absolute; left: 44px; display: flex; align-items: center; width: 152px; }
.sl-r { top: 6px; } .sl-g { top: 29px; } .sl-b { top: 52px; }
.cslider label { width: 13px; font-size: 11px; }
.bar { width: 101px; height: 6px; border: 1px solid #8a8a8a; position: relative; flex: none; }
.bar-r { background: linear-gradient(90deg, #008da1, #ff8da1); }
.bar-g { background: linear-gradient(90deg, #ba00a1, #baffa1); }
.bar-b { background: linear-gradient(90deg, #ba8d00, #ba8dff); }
.thumb { position: absolute; top: 5px; width: 0; height: 0; border: 5px solid transparent; border-bottom: 7px solid #2f8f3f; border-top: 0; }
.thumb::after { content: ""; position: absolute; left: -3px; top: 2px; border: 3px solid transparent; border-bottom: 4px solid #fff; border-top: 0; }
.bar-r .thumb { left: 68px; } .bar-g .thumb { left: 50px; } .bar-b .thumb { left: 58px; }
.val { width: 30px; height: 18px; margin-left: 6px; flex: none; background: #fff; border: 1px solid #ddd; line-height: 16px; text-align: center; font-size: 10.500px; }
.spectrum { position: absolute; left: 6px; top: 79px; display: flex; width: 198px; height: 15px; }
.ramp { width: 190px; background: linear-gradient(#fff, transparent 45%, #000), linear-gradient(90deg, #f00, #ff0 16%, #0f0 33%, #0ff 50%, #00f 66%, #f0f 83%, #f00); }
.bw { width: 8px; background: linear-gradient(#fff 50%, #000 50%); }
.pgap { height: 3px; flex: none; background: #333; }
.pgap-2 { height: 5px; }
.blend, .lockrow { flex: none; display: flex; align-items: center; padding-left: 5px; border-bottom: 1px solid #a0a0a0; font-size: 10.200px; }
.blend { height: 26px; }
.lockrow { height: 24px; padding-left: 8px; }
.bselect { width: 115px; flex: none; height: 18px; display: flex; align-items: center; justify-content: space-between; padding: 0 5px 0 3px; background: #fff; }
.blabel { flex: none; margin-left: 4px; width: 42px; white-space: nowrap; margin-top: -2px; }
.bnum { width: 36px; flex: none; height: 17px; background: #fff; border: 1px solid #ddd; line-height: 15px; text-align: center; font-size: 10.500px; }
.bstep { width: 16px; flex: none; height: 17px; background: linear-gradient(#ddd, #bbb); position: relative; }
.bstep::after { content: ""; position: absolute; left: 6px; top: 5px; border: 3px solid transparent; border-left: 4px solid #3f5fb0; border-right: 0; }
.blabel.lk { width: 31px; margin-left: 0; }
.lk-trans { width: 12px; height: 12px; flex: none; border: 1px solid #777; background: repeating-conic-gradient(#aaa 0 25%, #fff 0 50%) 0 0 / 6px 6px; }
.lk-ic { width: 13px; height: 13px; margin-left: 6px; }
.blabel.fill { width: 20px; margin-left: 40px; }
.layers-wrap { height: 456px; flex: none; display: flex; }
.layers { width: 206px; flex: none; display: flex; flex-direction: column; }
.layer { display: flex; flex: none; border-bottom: 1px solid #a4a4a4; height: 64px; }
.eyecol { width: 25px; flex: none; padding: 5px 0 0 5px; border-right: 1px solid #a0a0a0; }
.eyebox { display: flex; align-items: center; justify-content: center; width: 15px; height: 15px; border: 1px solid #b4b4b4; background: #dcdcdc; }
.eyebox svg { width: 13px; height: 9px; }
.lbody { flex: 1; min-width: 0; display: flex; flex-direction: column; }
.lmain { height: 25px; flex: none; display: flex; align-items: center; padding-left: 11px; position: relative; }
.lthumb { width: 17px; height: 17px; flex: none; margin-top: 1px; background: #04403f; border: 1px solid #000; }
.clip { width: 8px; height: 14px; margin-left: 10px; }
.lmask { width: 32px; height: 19px; flex: none; margin-left: 5px; position: relative; background: #7d7d7d; border: 1px solid #000; }
.lmask::after { content: ""; position: absolute; top: 9px; width: 4px; height: 3px; background: #fff; border: 1px solid #000; }
.m1::after { left: 19px; } .m2::after { left: 16px; } .m3::after { left: 13px; } .m4::after { left: 9px; } .m5::after { left: 6px; }
.lname { margin-left: 8px; white-space: nowrap; font-size: 10px; letter-spacing: -.15px; }
.fx { font: italic 700 14px/14px "Liberation Serif", serif; color: #333; text-shadow: 1px 1px 1px #999; }
.lmain .fx { position: absolute; left: 153px; top: 5px; }
.lup { position: absolute; right: 0; top: 0; width: 11px; height: 25px; background: #cfcfcf; }
.lup::after { content: ""; position: absolute; left: 2px; top: 9px; border: 4px solid transparent; border-bottom: 5px solid #333; border-top: 0; }
.eff, .ovr { display: flex; align-items: center; flex: none; font-size: 10px; }
.eff { height: 21px; padding: 0 0 3px 20px; position: relative; }
.eff svg, .ovr svg { width: 13px; height: 9px; margin-right: 5px; }
.eff::after { content: ""; position: absolute; left: 33px; right: 0; bottom: 0; height: 1px; background: #a4a4a4; }
.ovr { height: 17px; padding: 0 0 2px 37px; }
.ovr-g { padding-left: 55px; }
.group { height: 23px; }
.group .eyecol { padding-top: 4px; }
.gbody { flex-direction: row; align-items: center; padding-left: 8px; font-size: 10px; }
.gtri { width: 0; height: 0; flex: none; border: 5px solid transparent; border-left: 6px solid #3b3bc0; border-right: 0; }
.gfold { width: 15px; height: 12px; margin-left: 8px; }
.gbody span { margin-left: 13px; }
.l20 { height: 26px; }
.l20body { flex-direction: row; align-items: center; padding-left: 10px; font-size: 10px; }
.clipdown { width: 8px; height: 8px; }
.l20thumb { width: 31px; height: 19px; flex: none; margin-left: 2px; border: 1px solid #000; background: linear-gradient(#222 0 60%, transparent 60%), repeating-conic-gradient(#ccc 0 25%, #fff 0 50%) 0 0 / 8px 8px; }
.l20body span { margin-left: 9px; }
.l21 .eyecol { padding-top: 6px; border-right: 0; }
.lsel { background: #3399ff; height: 26px; padding-left: 2px; }
.l21thumb { width: 35px; height: 21px; flex: none; border: 2px solid #fff; outline: 1px solid #000; outline-offset: -1px; background: linear-gradient(#78b2b2 0 65%, transparent 65%), repeating-conic-gradient(#ccc 0 25%, #fff 0 50%) 0 0 / 8px 8px; }
.lname-sel { margin-left: 7px; color: #fff; font-weight: 700; text-decoration: underline; letter-spacing: 0; }
.l21 .eff { height: 20px; }
.l21 .ovr { height: 18px; }
.lscroll { flex: 1; margin: 0 2px 0 1px; background: #efefef; display: flex; flex-direction: column; align-items: center; padding: 5px 0; }
.lthumbbar { width: 13px; height: 248px; flex: none; margin-top: 100px; background: linear-gradient(90deg, #f4f4f4, #c4c4c4); border: 1px solid #bbb; }
.lscroll .down { margin-top: auto; }
.lfoot { flex: 1; display: flex; align-items: center; gap: 12px; padding: 0 0 0 22px; border-top: 1px solid #8a8a8a; border-bottom: 1px solid #555; }
.lfoot svg { width: 15px; height: 13px; }
.fx-foot { width: 15px; flex: none; font-size: 14px; }
.frame-bottom { height: 5px; flex: none; margin: 0 -4px; background: #dcdcdc; border-top: 1px solid #666; }
```
